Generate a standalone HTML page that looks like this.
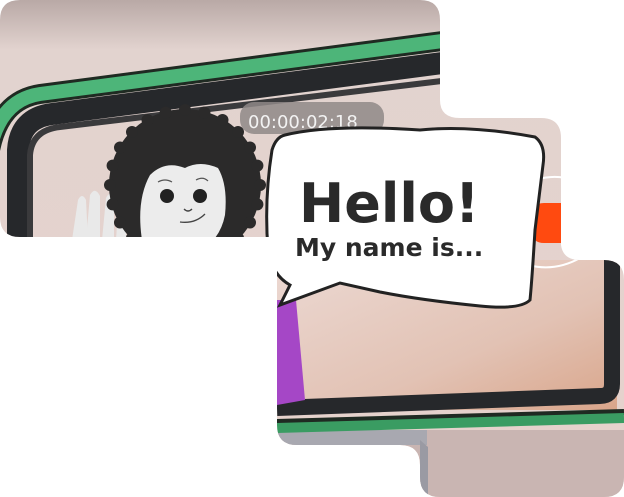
<!DOCTYPE html>
<html><head><meta charset="utf-8"><style>
html,body{margin:0;padding:0;background:#fff;width:624px;height:497px;overflow:hidden}
</style></head><body>
<svg width="624" height="497" viewBox="0 0 624 497" xmlns="http://www.w3.org/2000/svg">
<defs>
<clipPath id="c"><path d="M0,20 Q0,0 20,0 H420 Q440,0 440,20 V100 Q440,118 460,118 H541 Q561,118 561,138 V245 Q563,260 580,260 H604 Q624,260 624,280 V477 Q624,497 604,497 H440 Q420,497 420,477 V465 Q420,445 400,445 H297 Q277,445 277,425 V237 H20 Q0,237 0,217 Z"/></clipPath>
<linearGradient id="bg" x1="0" y1="0" x2="0" y2="1"><stop offset="0" stop-color="#b9a9a6"/><stop offset="0.1" stop-color="#e2d3cf"/><stop offset="1" stop-color="#e6d2cc"/></linearGradient>
<linearGradient id="sc" x1="0" y1="0" x2="1" y2="1"><stop offset="0" stop-color="#ecd9d3"/><stop offset="0.6" stop-color="#e2c2b4"/><stop offset="1" stop-color="#d9a58a"/></linearGradient>
</defs>
<g clip-path="url(#c)">
<rect width="624" height="497" fill="url(#bg)"/>
<rect x="277" y="430" width="347" height="67" fill="#c9b5b2"/>
<rect x="277" y="430" width="150" height="15" fill="#a8a8b0"/>
<path d="M420,440 L428,447 V497 H420 Z" fill="#9a9aa3"/>
<!-- upper frame -->
<path d="M-10,150 Q0,100 40,94 L450,40" stroke="#1f2a22" stroke-width="20" fill="none"/>
<path d="M-10,150 Q0,100 40,94 L450,40" stroke="#4db579" stroke-width="14" fill="none"/>
<path d="M18,250 V150 Q20,118 52,114 L450,62" stroke="#26282b" stroke-width="22" fill="none"/>
<path d="M30,250 V155 Q32,130 60,127 L450,80" stroke="#3a3a3c" stroke-width="6" fill="none"/>
<!-- lower screen -->
<rect x="277" y="260" width="340" height="150" fill="url(#sc)"/>
<path d="M277,408 L600,396 Q612,396 612,384 V250" stroke="#26282b" stroke-width="16" fill="none"/>
<path d="M277,422 L624,412" stroke="#1f2a22" stroke-width="6"/>
<path d="M277,428 L624,418" stroke="#3a9c62" stroke-width="10"/>
<path d="M277,300 L296,300 L305,400 L277,405 Z" fill="#a547c6"/>
<!-- hand -->
<g fill="#e9e9e9"><path d="M72,240 L78,200 Q82,192 86,200 L88,240Z"/><path d="M86,240 L90,195 Q95,186 100,196 L100,240Z"/><path d="M102,240 L106,198 Q110,190 114,198 L114,240Z"/><path d="M116,240 L118,210 Q122,204 126,212 L126,240Z"/></g>
<!-- afro -->
<g fill="#2b2a2a"><circle cx="185" cy="185" r="76"/>
<circle cx="260" cy="185" r="6"/><circle cx="257.4" cy="204.4" r="6"/><circle cx="250" cy="222.5" r="6"/><circle cx="238" cy="238" r="6"/><circle cx="222.5" cy="250" r="6"/><circle cx="204.4" cy="257.4" r="6"/><circle cx="185" cy="260" r="6"/><circle cx="165.6" cy="257.4" r="6"/><circle cx="147.5" cy="250" r="6"/><circle cx="132" cy="238" r="6"/><circle cx="120" cy="222.5" r="6"/><circle cx="112.6" cy="204.4" r="6"/><circle cx="110" cy="185" r="6"/><circle cx="112.6" cy="165.6" r="6"/><circle cx="120" cy="147.5" r="6"/><circle cx="132" cy="132" r="6"/><circle cx="147.5" cy="120" r="6"/><circle cx="165.6" cy="112.6" r="6"/><circle cx="185" cy="110" r="6"/><circle cx="204.4" cy="112.6" r="6"/><circle cx="222.5" cy="120" r="6"/><circle cx="238" cy="132" r="6"/><circle cx="250" cy="147.5" r="6"/><circle cx="257.4" cy="165.6" r="6"/></g>
<path d="M142,240 Q136,200 150,175 Q165,160 185,168 Q200,160 218,168 Q228,185 225,215 Q220,240 200,250 H142Z" fill="#ececec"/>
<circle cx="167" cy="196" r="7" fill="#222"/><circle cx="200" cy="196" r="7" fill="#222"/>
<path d="M158,182 Q165,178 172,182 M196,180 Q203,176 208,181" stroke="#555" stroke-width="1.2" fill="none"/>
<path d="M184,209 Q188,213 192,209 M180,222 Q195,224 205,214" stroke="#444" stroke-width="1.3" fill="none"/>
<!-- timer -->
<rect x="240" y="102" width="144" height="32" rx="14" fill="#8f8887" opacity="0.85"/>
<text x="248" y="128" font-family="DejaVu Sans, sans-serif" font-size="18" fill="#f2f2f2">00:00:02:18</text>
<!-- orange tab -->
<path d="M544,203 H565 V243 H544 Q532,243 532,231 V215 Q532,203 544,203Z" fill="#ff4a10"/>
<path d="M535,180 Q552,175 565,178 M528,265 Q555,272 580,258" stroke="#fff" stroke-width="2" fill="none"/>
<!-- bubble -->
<path d="M285,135 Q330,124 420,130 Q470,125 535,137 Q546,145 543,165 L535,230 Q532,280 530,300 Q520,310 480,306 Q420,300 380,292 L340,283 L280,305 L290,285 Q272,275 268,250 Q264,200 272,150 Q276,137 285,135Z" fill="#fff" stroke="#222" stroke-width="3"/>
<text x="299" y="222" font-family="DejaVu Sans, sans-serif" font-weight="bold" font-size="54" fill="#2a2a2a">Hello!</text>
<text x="295" y="256" font-family="DejaVu Sans, sans-serif" font-weight="bold" font-size="25" fill="#2a2a2a">My name is...</text>
</g>
</svg>
</body></html>
